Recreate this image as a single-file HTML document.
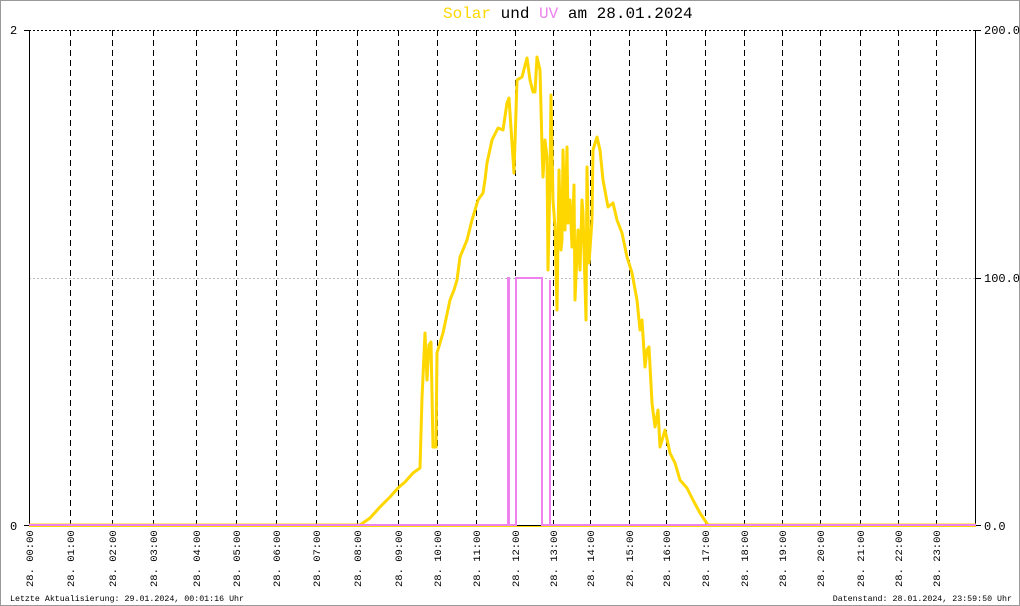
<!DOCTYPE html>
<html><head><meta charset="utf-8"><style>
html,body{margin:0;padding:0;background:#fff}
svg{display:block}
text{font-family:"Liberation Mono","DejaVu Sans Mono",monospace}
</style></head><body>
<svg width="1020" height="606" viewBox="0 0 1020 606" xmlns="http://www.w3.org/2000/svg">
<rect x="0.5" y="0.5" width="1019" height="605" fill="#fff" stroke="#999"/>
<text x="443" y="18" font-size="16" fill="#000"><tspan fill="#ffd700">Solar</tspan> und <tspan fill="#ee82ee">UV</tspan> am 28.01.2024</text>
<!-- grid -->
<line x1="29" y1="30.5" x2="976" y2="30.5" stroke="#000" stroke-dasharray="2,2"/>
<line x1="29" y1="278.5" x2="976" y2="278.5" stroke="#bbb" stroke-dasharray="2,2"/>
<g stroke="#000" stroke-dasharray="6,4">
<line x1="70.5" y1="30" x2="70.5" y2="526"/><line x1="112.5" y1="30" x2="112.5" y2="526"/><line x1="153.5" y1="30" x2="153.5" y2="526"/><line x1="196.5" y1="30" x2="196.5" y2="526"/><line x1="236.5" y1="30" x2="236.5" y2="526"/><line x1="276.5" y1="30" x2="276.5" y2="526"/><line x1="316.5" y1="30" x2="316.5" y2="526"/><line x1="357.5" y1="30" x2="357.5" y2="526"/><line x1="398.5" y1="30" x2="398.5" y2="526"/><line x1="437.5" y1="30" x2="437.5" y2="526"/><line x1="476.5" y1="30" x2="476.5" y2="526"/><line x1="515.5" y1="30" x2="515.5" y2="526"/><line x1="553.5" y1="30" x2="553.5" y2="526"/><line x1="590.5" y1="30" x2="590.5" y2="526"/><line x1="629.5" y1="30" x2="629.5" y2="526"/><line x1="666.5" y1="30" x2="666.5" y2="526"/><line x1="705.5" y1="30" x2="705.5" y2="526"/><line x1="744.5" y1="30" x2="744.5" y2="526"/><line x1="782.5" y1="30" x2="782.5" y2="526"/><line x1="820.5" y1="30" x2="820.5" y2="526"/><line x1="860.5" y1="30" x2="860.5" y2="526"/><line x1="898.5" y1="30" x2="898.5" y2="526"/><line x1="936.5" y1="30" x2="936.5" y2="526"/>
</g>
<!-- axes -->
<g stroke="#000" stroke-width="1">
<line x1="29.5" y1="30" x2="29.5" y2="526"/>
<line x1="975.5" y1="30" x2="975.5" y2="526"/>
<line x1="24" y1="30.5" x2="29" y2="30.5"/><line x1="24" y1="525.5" x2="29" y2="525.5"/>
<line x1="976" y1="30.5" x2="981" y2="30.5"/><line x1="976" y1="278.5" x2="981" y2="278.5"/><line x1="976" y1="525.5" x2="981" y2="525.5"/>
</g>
<line x1="29" y1="526.5" x2="976" y2="526.5" stroke="#ffd700" stroke-width="1"/>
<!-- solar -->
<polyline fill="none" stroke="#ffd700" stroke-width="3" stroke-linejoin="round" points="29,525 360,525 370,518 380,507 390,497 398,488 405,482 413,473 420,468 422,398 425,333 427,380 429,345 431,342 433,447 436,447 437,353 443,333 450,300 454,290 457,280 460,257 467,240 472,220 478,200 483,193 485,180 487,163 492,140 498,128 503,130 507,103 509,98 512,143 514,173 517,80 522,77 527,58 530,80 533,92 535,92 537,57 540,70 542,147 543,177 545,140 547,157 548,270 550,180 551,95 553,200 555,227 557,310 559,170 561,250 562,240 563,150 565,230 567,147 568,223 570,200 572,247 574,185 575,300 578,230 580,270 582,200 583,213 586,320 587,167 589,263 592,220 593,150 597,137 600,150 603,180 608,207 613,203 617,220 622,233 627,257 632,273 637,300 640,330 642,320 645,367 647,350 649,347 652,403 655,427 658,410 660,447 665,430 670,453 675,463 680,480 687,488 693,500 700,513 708,525 976,525"/>
<!-- uv -->
<path d="M29,525 H508 V278 H509 V525 H516 V278 H542 V525 H550 V280 V525 H976" fill="none" stroke="#ee82ee" stroke-width="2"/>
<line x1="517" y1="525.5" x2="541" y2="525.5" stroke="#000" stroke-width="1"/>
<!-- y labels -->
<g font-size="12" fill="#000">
<text x="10" y="34">2</text><text x="10" y="530">0</text>
<text x="984" y="34">200.0</text><text x="984" y="282">100.0</text><text x="984" y="530">0.0</text>
</g>
<!-- x labels -->
<g font-size="10.5" fill="#000">
<text transform="translate(33,587) rotate(-90)">28. 00:00</text>
<text transform="translate(74,587) rotate(-90)">28. 01:00</text>
<text transform="translate(116,587) rotate(-90)">28. 02:00</text>
<text transform="translate(157,587) rotate(-90)">28. 03:00</text>
<text transform="translate(200,587) rotate(-90)">28. 04:00</text>
<text transform="translate(240,587) rotate(-90)">28. 05:00</text>
<text transform="translate(280,587) rotate(-90)">28. 06:00</text>
<text transform="translate(320,587) rotate(-90)">28. 07:00</text>
<text transform="translate(361,587) rotate(-90)">28. 08:00</text>
<text transform="translate(402,587) rotate(-90)">28. 09:00</text>
<text transform="translate(441,587) rotate(-90)">28. 10:00</text>
<text transform="translate(480,587) rotate(-90)">28. 11:00</text>
<text transform="translate(519,587) rotate(-90)">28. 12:00</text>
<text transform="translate(557,587) rotate(-90)">28. 13:00</text>
<text transform="translate(594,587) rotate(-90)">28. 14:00</text>
<text transform="translate(633,587) rotate(-90)">28. 15:00</text>
<text transform="translate(670,587) rotate(-90)">28. 16:00</text>
<text transform="translate(709,587) rotate(-90)">28. 17:00</text>
<text transform="translate(748,587) rotate(-90)">28. 18:00</text>
<text transform="translate(786,587) rotate(-90)">28. 19:00</text>
<text transform="translate(824,587) rotate(-90)">28. 20:00</text>
<text transform="translate(864,587) rotate(-90)">28. 21:00</text>
<text transform="translate(902,587) rotate(-90)">28. 22:00</text>
<text transform="translate(940,587) rotate(-90)">28. 23:00</text>
</g>
<g font-size="8.3" fill="#000">
<text x="10" y="601">Letzte Aktualisierung: 29.01.2024, 00:01:16 Uhr</text>
<text x="1012" y="601" text-anchor="end">Datenstand: 28.01.2024, 23:59:50 Uhr</text>
</g>
</svg>
</body></html>
